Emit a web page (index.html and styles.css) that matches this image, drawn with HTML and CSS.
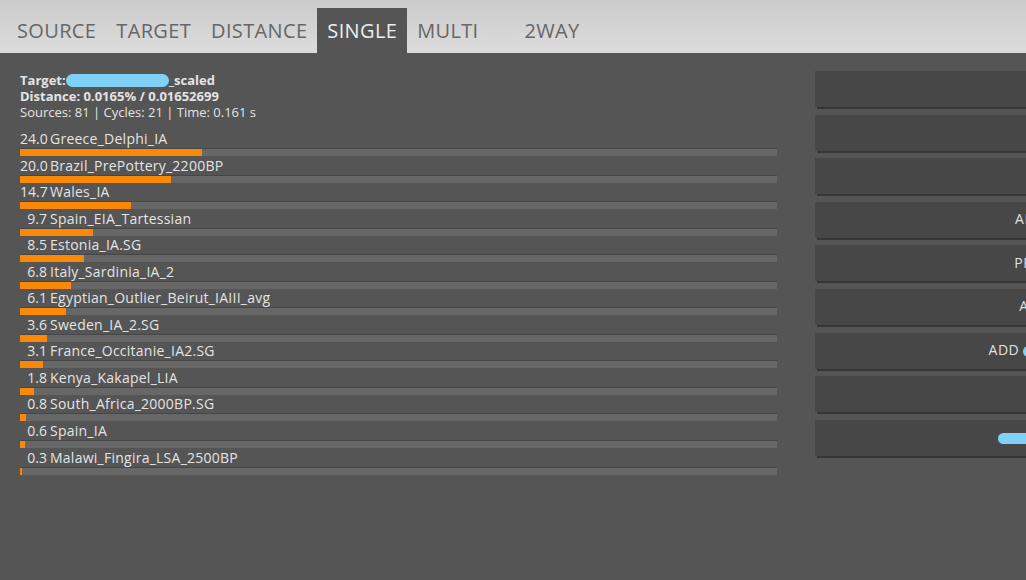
FILE: index.html
```html
<!DOCTYPE html>
<html>

<head>
  <meta charset="UTF-8">
  <meta name="viewport" content="width=device-width, initial-scale=1.0">
  <title>Single</title>
  <link rel="stylesheet" href="styles.css">
</head>

<body>
  <nav class="tabs">
    <span class="tab">SOURCE</span>
    <span class="tab">TARGET</span>
    <span class="tab">DISTANCE</span>
    <span class="tab active">SINGLE</span>
    <span class="tab">MULTI</span>
    <span class="tab tab--ghost">2D</span>
    <span class="tab">2WAY</span>
  </nav>

  <main class="page">
    <section class="results">
      <div class="summary">
        <div class="strong">Target:<span class="mask mask--name"></span>_scaled</div>
        <div class="strong">Distance: 0.0165% / 0.01652699</div>
        <div>Sources: 81 | Cycles: 21 | Time: 0.161 s</div>
      </div>

      <ul class="list">
        <li class="row">
          <div class="label"><span class="value">24.0</span>Greece_Delphi_IA</div>
          <div class="track"><div class="fill" style="width: 24.0%"></div></div>
        </li>
        <li class="row">
          <div class="label"><span class="value">20.0</span>Brazil_PrePottery_2200BP</div>
          <div class="track"><div class="fill" style="width: 20.0%"></div></div>
        </li>
        <li class="row">
          <div class="label"><span class="value">14.7</span>Wales_IA</div>
          <div class="track"><div class="fill" style="width: 14.7%"></div></div>
        </li>
        <li class="row">
          <div class="label"><span class="value">9.7</span>Spain_EIA_Tartessian</div>
          <div class="track"><div class="fill" style="width: 9.7%"></div></div>
        </li>
        <li class="row">
          <div class="label"><span class="value">8.5</span>Estonia_IA.SG</div>
          <div class="track"><div class="fill" style="width: 8.5%"></div></div>
        </li>
        <li class="row">
          <div class="label"><span class="value">6.8</span>Italy_Sardinia_IA_2</div>
          <div class="track"><div class="fill" style="width: 6.8%"></div></div>
        </li>
        <li class="row">
          <div class="label"><span class="value">6.1</span>Egyptian_Outlier_Beirut_IAIII_avg</div>
          <div class="track"><div class="fill" style="width: 6.1%"></div></div>
        </li>
        <li class="row">
          <div class="label"><span class="value">3.6</span>Sweden_IA_2.SG</div>
          <div class="track"><div class="fill" style="width: 3.6%"></div></div>
        </li>
        <li class="row">
          <div class="label"><span class="value">3.1</span>France_Occitanie_IA2.SG</div>
          <div class="track"><div class="fill" style="width: 3.1%"></div></div>
        </li>
        <li class="row">
          <div class="label"><span class="value">1.8</span>Kenya_Kakapel_LIA</div>
          <div class="track"><div class="fill" style="width: 1.8%"></div></div>
        </li>
        <li class="row">
          <div class="label"><span class="value">0.8</span>South_Africa_2000BP.SG</div>
          <div class="track"><div class="fill" style="width: 0.8%"></div></div>
        </li>
        <li class="row">
          <div class="label"><span class="value">0.6</span>Spain_IA</div>
          <div class="track"><div class="fill" style="width: 0.6%"></div></div>
        </li>
        <li class="row">
          <div class="label"><span class="value">0.3</span>Malawi_Fingira_LSA_2500BP</div>
          <div class="track"><div class="fill" style="width: 0.3%"></div></div>
        </li>
      </ul>
    </section>

    <aside class="actions">
      <button class="btn">RUN</button>
      <button class="btn">STOP</button>
      <button class="btn">SAVE</button>
      <button class="btn">ADD ALL</button>
      <button class="btn">PREVIEW</button>
      <button class="btn">ADJUST</button>
      <button class="btn">ADD <span class="mask mask--btn"></span></button>
      <button class="btn">FIT</button>
      <button class="btn"><span class="mask mask--wide"></span></button>
    </aside>
  </main>
</body>

</html>
```

FILE: styles.css
```css
* {
  padding: 0;
  margin: 0;
  box-sizing: border-box;
}

body {
  height: 100vh;
  font-family: "Open Sans", "DejaVu Sans", sans-serif;
  background-color: #555555;
  color: #e4e4e4;
  overflow: hidden;
}

.tabs {
  height: 53px;
  display: flex;
  align-items: flex-end;
  padding-left: 7px;
  background: linear-gradient(#cbcbcb, #dcdcdc);
}

.tab {
  height: 45px;
  padding: 0 10px;
  display: flex;
  align-items: center;
  font-size: 20px;
  letter-spacing: 0.35px;
  color: #666666;
  white-space: nowrap;
}

.tab.active {
  background-color: #555555;
  color: #eeeeee;
}

/* hidden tab, text almost the colour of the bar */
.tab--ghost {
  width: 26px;
  padding: 0;
  justify-content: center;
  font-size: 12px;
  color: #d4d4d4;
}

.page {
  display: flex;
  width: 1400px;
}

.results {
  width: 777px;
  padding: 19px 0 0 20px;
}

.summary {
  font-size: 13px;
  line-height: 16px;
  margin-bottom: 10px;
}

.summary .strong {
  font-weight: 700;
}

.mask {
  display: inline-block;
  background-color: #7fd1f7;
  border-radius: 7px;
  vertical-align: middle;
}

.mask--name {
  width: 103px;
  height: 13px;
  margin-top: -3px;
}

.mask--btn {
  width: 78px;
  height: 11px;
}

.mask--wide {
  width: 94px;
  height: 11px;
}

.list {
  list-style: none;
}

.row {
  height: 26.55px;
}

.label {
  display: flex;
  font-size: 14px;
  line-height: 18px;
  letter-spacing: 0.25px;
  white-space: nowrap;
}

.label .value {
  width: 27px;
  margin-right: 3px;
  letter-spacing: 0;
  text-align: right;
}

.track {
  height: 8px;
  border-top: 1px solid #464646;
  background-color: #676767;
}

.track .fill {
  height: 100%;
  background-color: #f98906;
}

.actions {
  display: flex;
  flex-direction: column;
  gap: 7.6px;
  width: 460px;
  margin-left: 38px;
  padding-top: 18px;
}

.btn {
  height: 36px;
  border: none;
  border-bottom: 2px solid transparent;
  background-color: #474747;
  box-shadow: 2px 2px 0 #363636;
  font-family: inherit;
  font-size: 14px;
  letter-spacing: 0.5px;
  color: #e0e0e0;
  text-align: center;
}
```
